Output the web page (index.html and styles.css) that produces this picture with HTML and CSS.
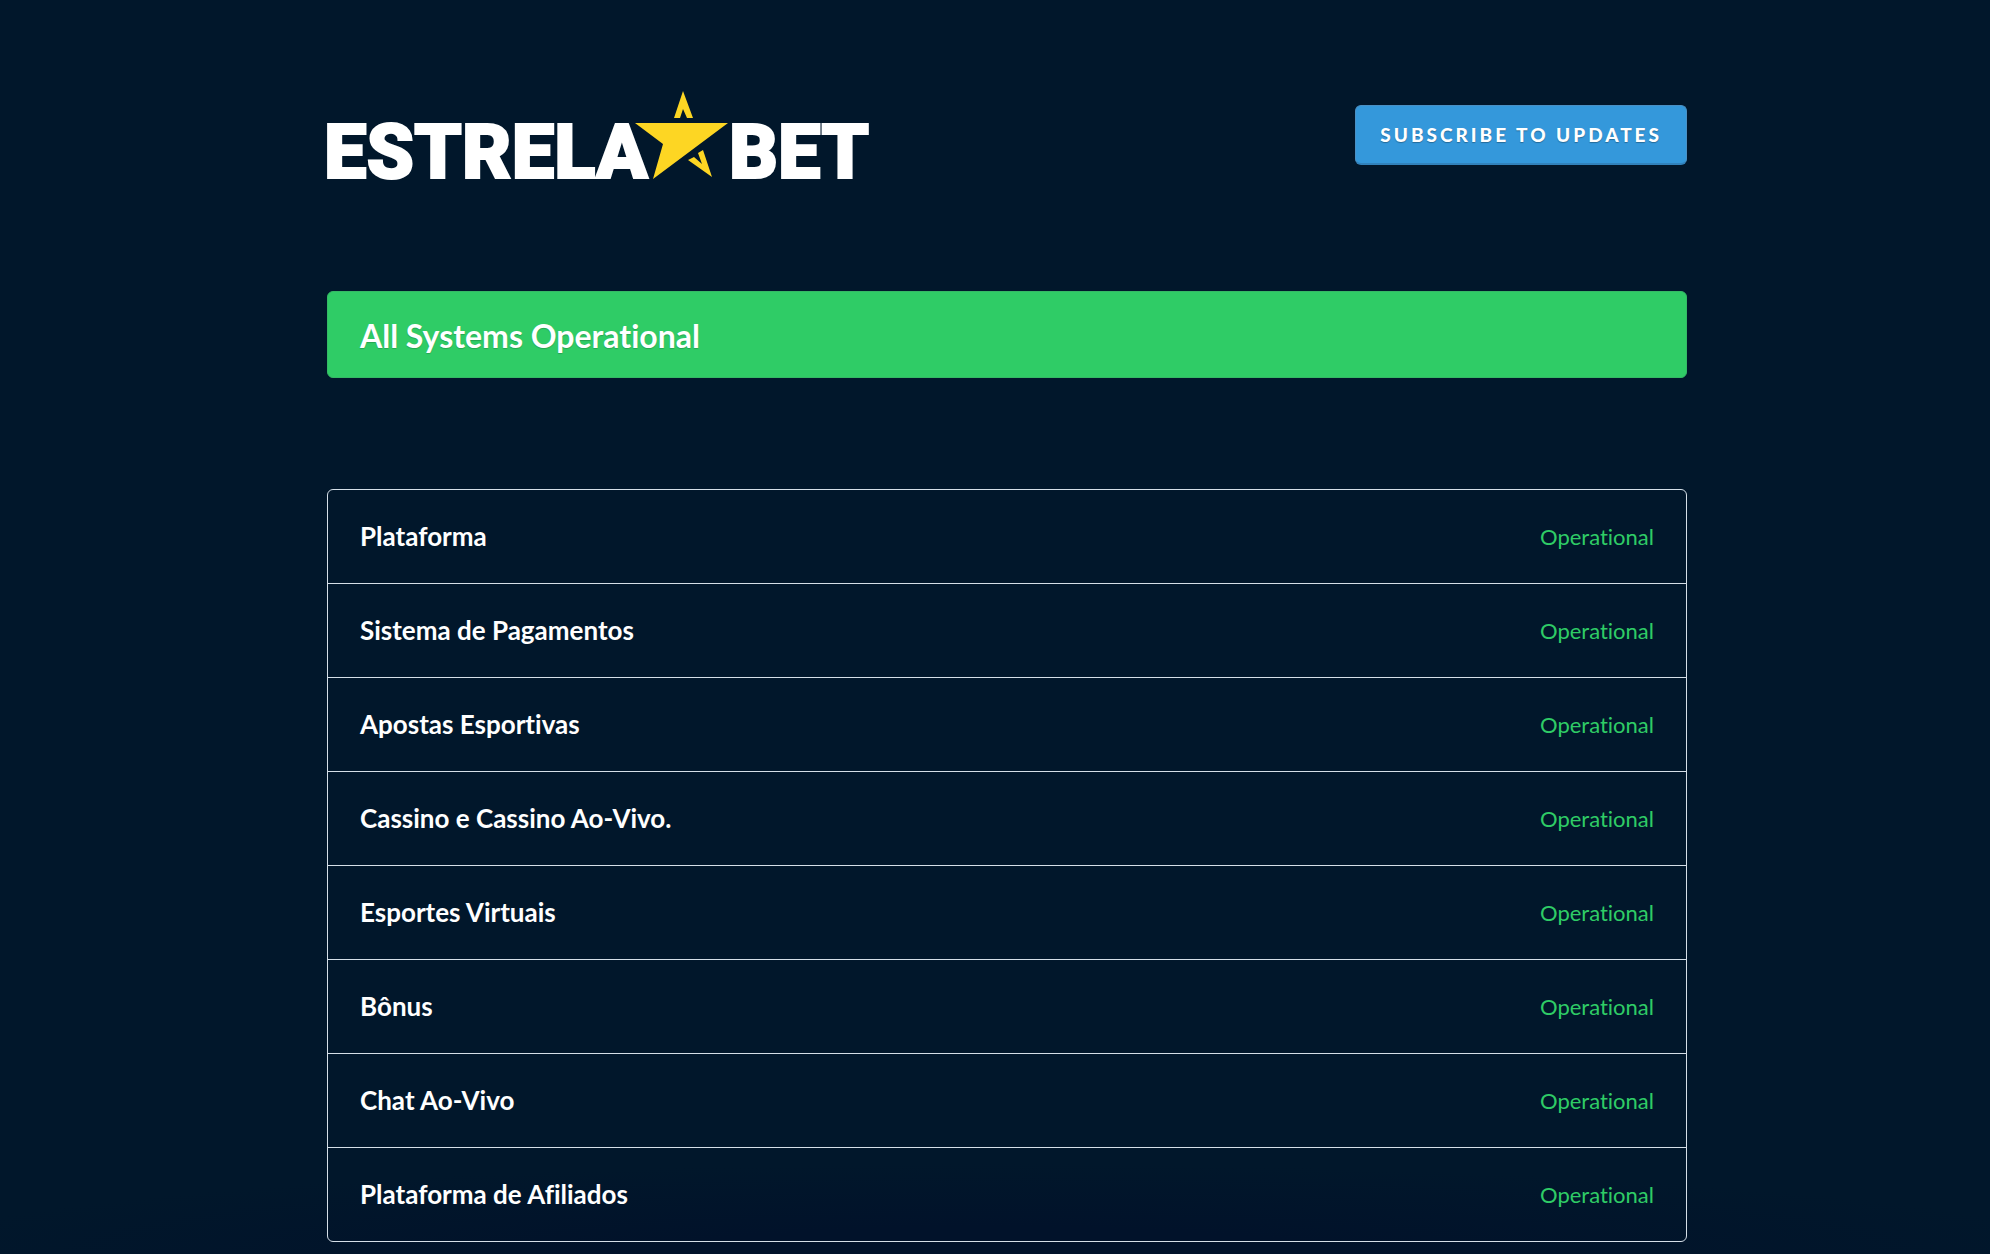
FILE: index.html
```html
<!DOCTYPE html>
<html lang="pt-BR">

<head>
    <meta charset="UTF-8">
    <meta name="viewport" content="width=device-width, initial-scale=1.0">
    <title>EstrelaBet Status</title>
    <link rel="stylesheet" href="styles.css">
</head>

<body>

    <div class="container">

        <!-- Header -->
        <header class="masthead">
            <a href="#" class="logo" aria-label="EstrelaBet">
                <svg viewBox="0 0 544 90" width="544" height="90">
                    <text class="logo-text" x="-3" y="88">ESTRELA</text>
                    <g fill="#fdd623">
                        <path d="M308 33H401L326 89L336 54Z" />
                        <path d="M356 1L347 28H353L356 19L360 28H366Z" />
                        <path d="M385 87L361 70L367 67L375 74L371 63L376 60Z" />
                    </g>
                    <text class="logo-text" x="402" y="88">BET</text>
                </svg>
            </a>
            <button type="button" class="subscribe">Subscribe to updates</button>
        </header>

        <!-- Overall status -->
        <div class="page-status">
            <h1>All Systems Operational</h1>
        </div>

        <!-- Components -->
        <ul class="components">
            <li><span class="name">Plataforma</span><span class="status">Operational</span></li>
            <li><span class="name">Sistema de Pagamentos</span><span class="status">Operational</span></li>
            <li><span class="name">Apostas Esportivas</span><span class="status">Operational</span></li>
            <li><span class="name">Cassino e Cassino Ao-Vivo.</span><span class="status">Operational</span></li>
            <li><span class="name">Esportes Virtuais</span><span class="status">Operational</span></li>
            <li><span class="name">Bônus</span><span class="status">Operational</span></li>
            <li><span class="name">Chat Ao-Vivo</span><span class="status">Operational</span></li>
            <li><span class="name">Plataforma de Afiliados</span><span class="status">Operational</span></li>
        </ul>

    </div>

</body>

</html>
```

FILE: styles.css
```css
* {
    box-sizing: border-box;
}

body {
    margin: 0;
    padding: 90px 0 12px 24px;
    min-height: 100vh;
    background: #01172b radial-gradient(ellipse 55% 90px at 50% 100%, #01122a 30%, #01172b 100%) no-repeat;
    color: #ffffff;
    font-family: Lato, "Open Sans", sans-serif;
    font-variant-ligatures: none;
}

.container {
    max-width: 1360px;
    margin: 0 auto;
}

/* Header */
.masthead {
    display: flex;
    justify-content: space-between;
    align-items: center;
    gap: 24px;
    margin-bottom: 111px;
}

.logo svg {
    display: block;
    max-width: 100%;
    overflow: visible;
}

.logo-text {
    fill: #ffffff;
    stroke: #ffffff;
    stroke-width: 2px;
    font-family: Roboto, sans-serif;
    font-size: 76px;
    font-weight: 900;
}

.subscribe {
    padding: 0 24px;
    height: 60px;
    border: 1px solid #4a90c4;
    border-bottom: 2px solid #3182bc;
    border-radius: 6px;
    background-color: #3498db;
    color: #ffffff;
    font-family: inherit;
    font-size: 19px;
    font-weight: 900;
    letter-spacing: 3px;
    text-transform: uppercase;
    text-shadow: 0 1px 1px rgba(0, 0, 0, 0.3);
    cursor: pointer;
}

/* Overall status */
.page-status {
    margin-bottom: 111px;
    padding: 24px 32px 21px;
    border: 1px solid #35b965;
    border-radius: 6px;
    background-color: #2fcc66;
}

.page-status h1 {
    margin: 0;
    font-size: 32px;
    font-weight: 700;
    line-height: 40px;
    text-shadow: 0 1px 1px rgba(0, 0, 0, 0.2);
}

/* Components */
.components {
    margin: 0;
    padding: 0;
    border: 1px solid #d5dfe8;
    border-radius: 6px;
    list-style: none;
}

.components li {
    display: flex;
    justify-content: space-between;
    align-items: center;
    padding: 30px 32px;
    line-height: 33px;
}

.components li + li {
    border-top: 1px solid #d5dfe8;
}

.name {
    font-size: 26px;
    font-weight: 700;
}

.status {
    color: #2fcc66;
    font-size: 22px;
}
```
